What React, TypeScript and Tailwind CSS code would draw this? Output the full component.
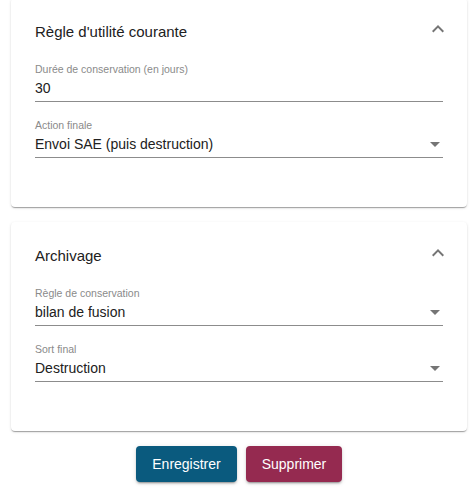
import React from "react";

const font = { fontFamily: "'Liberation Sans', Arial, sans-serif" };

function ExpandLess() {
  return (
    <svg width="24" height="24" viewBox="0 0 24 24" className="block">
      <path d="M12 8l-6 6 1.41 1.41L12 10.83l4.59 4.58L18 14z" fill="#757575" />
    </svg>
  );
}

function ArrowDrop() {
  return (
    <svg width="24" height="24" viewBox="0 0 24 24" className="block">
      <path d="M7 10l5 5 5-5z" fill="#757575" />
    </svg>
  );
}

function Field({ label, value, select, first }: { label: string; value: string; select?: boolean; first?: boolean }) {
  return (
    <div className={first ? "mt-[21px]" : "mt-[16px]"}>
      <div className="h-[14px] text-[10.5px] leading-[14px] text-[#8a8a8a]">{label}</div>
      <div className="mt-[2px] flex items-center justify-between border-b border-[#8c8c8c] pb-[3px]">
        <div className="h-[20px] text-[14px] leading-[20px] text-[#212121]">{value}</div>
        {select && (
          <div className="mr-[-4px] h-[20px] flex items-center">
            <ArrowDrop />
          </div>
        )}
      </div>
    </div>
  );
}

function Card({ title, children, className }: { title: string; children: React.ReactNode; className?: string }) {
  return (
    <div
      className={
        "bg-white rounded-[4px] px-[24px] pt-[25px] pb-[49px] shadow-[0_2px_1px_-1px_rgba(0,0,0,0.2),0_1px_1px_0_rgba(0,0,0,0.14),0_1px_3px_0_rgba(0,0,0,0.12)] " +
        (className ?? "")
      }
    >
      <div className="flex items-center justify-between h-[18px]">
        <div className="text-[15px] leading-[18px] text-[#212121]">{title}</div>
        <div className="mr-[-7px] mt-[-6px]">
          <ExpandLess />
        </div>
      </div>
      {children}
    </div>
  );
}

export default function App() {
  return (
    <div style={font} className="w-[475px] h-[492px] bg-white overflow-hidden">
      <div className="ml-[11px] mr-[8px] flex flex-col">
        <Card title="Règle d'utilité courante" className="-mt-[2px]">
          <Field first label="Durée de conservation (en jours)" value="30" />
          <Field label="Action finale" value="Envoi SAE (puis destruction)" select />
        </Card>
        <Card title="Archivage" className="mt-[15px]">
          <Field first label="Règle de conservation" value="bilan de fusion" select />
          <Field label="Sort final" value="Destruction" select />
        </Card>
        <div className="mt-[15px] flex justify-center gap-[9px]">
          <button className="h-[36px] w-[101px] rounded-[4px] bg-[#0a5a7e] text-white text-[14px] shadow-[0_3px_1px_-2px_rgba(0,0,0,0.2),0_2px_2px_0_rgba(0,0,0,0.14),0_1px_5px_0_rgba(0,0,0,0.12)]">
            Enregistrer
          </button>
          <button className="h-[36px] w-[96px] rounded-[4px] bg-[#952a50] text-white text-[14px] shadow-[0_3px_1px_-2px_rgba(0,0,0,0.2),0_2px_2px_0_rgba(0,0,0,0.14),0_1px_5px_0_rgba(0,0,0,0.12)]">
            Supprimer
          </button>
        </div>
      </div>
    </div>
  );
}
